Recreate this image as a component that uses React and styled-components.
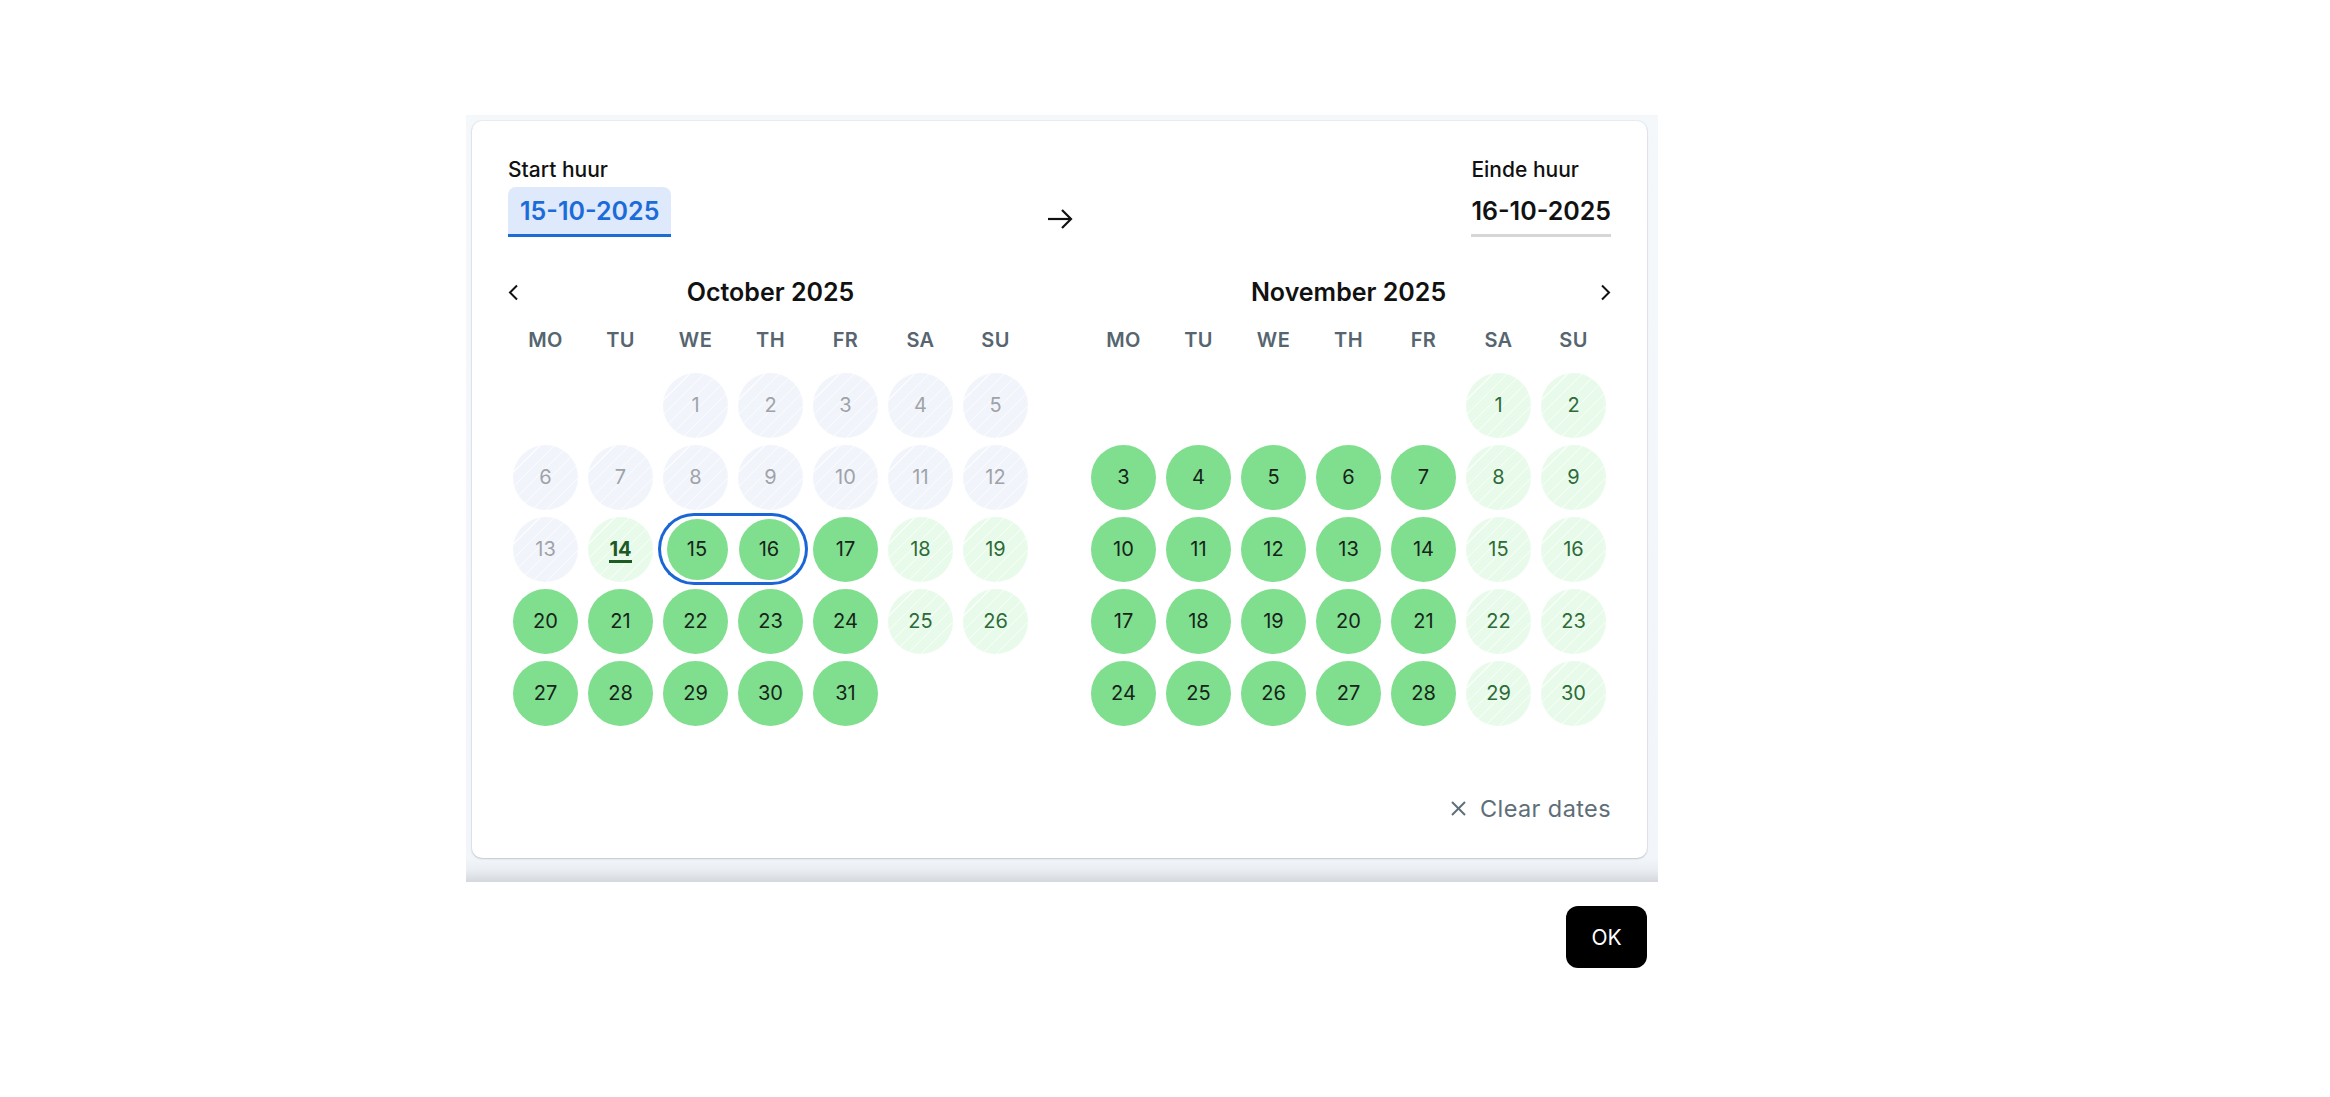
import React from 'react'
import styled, { createGlobalStyle, css } from 'styled-components'

const GlobalStyle = createGlobalStyle`
    body {
        margin: 0;
        background: #fff;
        font-family: Inter, "Noto Sans", sans-serif;
        color: #111;
    }
`

const Page = styled.div`
    padding: 115px 0 0 466px;
`

const Wrapper = styled.div`
    width: 1192px;
`

const Panel = styled.div`
    padding: 6px 11px 24px 6px;
    background: linear-gradient(to bottom, #f5f8fb 0, #f2f5f9 calc(100% - 24px), #eaeef3 calc(100% - 12px), #d4d7db 100%);
`

const Card = styled.div`
    background: #fff;
    border-radius: 10px;
    box-shadow: 0 1px 2px rgba(0, 0, 0, 0.16), 0 0 0 1px rgba(220, 228, 236, 0.5);
    padding: 37px 36px 37px;
`

const Header = styled.div`
    display: grid;
    grid-template-columns: 1fr auto 1fr;
    align-items: end;
`

const Field = styled.div`
    display: flex;
    flex-direction: column;
    align-items: flex-start;
    justify-self: ${p => (p.$right ? 'end' : 'start')};
`

const Label = styled.div`
    font-size: 21px;
    font-weight: 500;
    line-height: 24px;
    color: #111;
`

const DateBox = styled.div`
    margin-top: 5px;
    height: 47px;
    display: flex;
    align-items: center;
    font-size: 25px;
    font-weight: 600;
    ${p => p.$active ? css`
        padding: 0 12px;
        background: #dee9fb;
        color: #1b6bd8;
        border-radius: 8px 8px 0 0;
        border-bottom: 3px solid #1a6dd6;
    ` : css`
        padding: 0;
        color: #111;
        border-bottom: 3px solid #d6d6d6;
    `}
`

const ArrowWrap = styled.div`
    display: flex;
    margin-bottom: 4px;
`

const Months = styled.div`
    display: flex;
    justify-content: space-between;
    margin-top: 40px;
`

const Month = styled.div`
    width: 525px;
`

const MonthHead = styled.div`
    display: grid;
    grid-template-columns: 30px 1fr 30px;
    align-items: center;
    height: 30px;
`

const MonthTitle = styled.div`
    text-align: center;
    font-size: 25px;
    font-weight: 600;
    color: #111;
`

const NavBtn = styled.div`
    display: flex;
    justify-content: ${p => (p.$right ? 'flex-end' : 'flex-start')};
`

const Weekdays = styled.div`
    display: grid;
    grid-template-columns: repeat(7, 75px);
    margin-top: 18px;
    height: 30px;
    align-items: center;
`

const Weekday = styled.div`
    text-align: center;
    font-size: 20px;
    font-weight: 600;
    color: #56656f;
    letter-spacing: 0.4px;
`

const Days = styled.div`
    display: grid;
    grid-template-columns: repeat(7, 75px);
    grid-auto-rows: 72px;
    margin-top: 14px;
`

const Cell = styled.div`
    display: flex;
    align-items: center;
    justify-content: center;
    box-sizing: border-box;
    ${p => p.$range && css`
        border-top: 3px solid #1a66d6;
        border-bottom: 3px solid #1a66d6;
    `}
    ${p => p.$range === 'start' && css`
        border-left: 3px solid #1a66d6;
        border-radius: 37px 0 0 37px;
    `}
    ${p => p.$range === 'end' && css`
        border-right: 3px solid #1a66d6;
        border-radius: 0 37px 37px 0;
    `}
`

const stripes = 'repeating-linear-gradient(135deg, transparent 0 9px, rgba(255,255,255,0.75) 9px 10px)'

const Circle = styled.div`
    width: ${p => (p.$small ? 61 : 65)}px;
    height: ${p => (p.$small ? 61 : 65)}px;
    border-radius: 50%;
    display: flex;
    align-items: center;
    justify-content: center;
    font-size: 20px;
    font-weight: 400;
    ${p => p.$kind === 'past' && css`
        background: ${stripes}, #f1f5fb;
        color: #9fa3a8;
    `}
    ${p => p.$kind === 'light' && css`
        background: ${stripes}, #e8fbea;
        color: #2f6a39;
    `}
    ${p => p.$kind === 'today' && css`
        background: ${stripes}, #e8fbea;
        color: #1d5b25;
        font-weight: 700;
    `}
    ${p => p.$kind === 'avail' && css`
        background: #80de8f;
        color: #16241a;
    `}
`

const TodayNum = styled.span`
    border-bottom: 3px solid #1d5b25;
    line-height: 22px;
    padding-top: 3px;
`

const ClearRow = styled.div`
    display: flex;
    justify-content: flex-end;
    margin-top: 66px;
`

const ClearBtn = styled.div`
    display: flex;
    align-items: center;
    gap: 13px;
    height: 26px;
    font-size: 23.5px;
    font-weight: 400;
    color: #5e6e78;
    letter-spacing: 0.4px;
`

const Footer = styled.div`
    display: flex;
    justify-content: flex-end;
    padding-right: 11px;
    margin-top: 24px;
`

const OkButton = styled.button`
    width: 81px;
    height: 62px;
    border: none;
    border-radius: 12px;
    background: #000;
    color: #fff;
    font-family: Inter, "Noto Sans", sans-serif;
    font-size: 21px;
    font-weight: 400;
`

const WEEKDAYS = ['MO', 'TU', 'WE', 'TH', 'FR', 'SA', 'SU']

// kind of each day: past, today, light (weekend), avail
const octoberKind = (d) => {
    if (d < 14) return 'past'
    if (d === 14) return 'today'
    const wd = (d + 1) % 7 // 0 = mo
    if (wd === 5 || wd === 6) return 'light'
    return 'avail'
}

const novemberKind = (d) => {
    const wd = (d + 4) % 7
    if (wd === 5 || wd === 6) return 'light'
    return 'avail'
}

const Chevron = ({ dir }) => (
    <svg width="11" height="17" viewBox="0 0 11 17" fill="none">
        {dir === 'left'
            ? <polyline points="9,1.5 2,8.5 9,15.5" stroke="#111" strokeWidth="2" />
            : <polyline points="2,1.5 9,8.5 2,15.5" stroke="#111" strokeWidth="2" />}
    </svg>
)

const CalendarMonth = ({ title, offset, days, kindOf, nav, range }) => {
    const cells = []
    for (let i = 0; i < offset; i++) cells.push(<Cell key={'e' + i} />)
    for (let d = 1; d <= days; d++) {
        const r = range && range[d]
        const kind = kindOf(d)
        cells.push(
            <Cell key={d} $range={r}>
                <Circle $kind={kind} $small={!!r}>
                    {kind === 'today' ? <TodayNum>{d}</TodayNum> : d}
                </Circle>
            </Cell>
        )
    }
    return (
        <Month>
            <MonthHead>
                <NavBtn>{nav === 'left' && <Chevron dir="left" />}</NavBtn>
                <MonthTitle>{title}</MonthTitle>
                <NavBtn $right>{nav === 'right' && <Chevron dir="right" />}</NavBtn>
            </MonthHead>
            <Weekdays>
                {WEEKDAYS.map(w => <Weekday key={w}>{w}</Weekday>)}
            </Weekdays>
            <Days>{cells}</Days>
        </Month>
    )
}

const App = () => {
    return (
        <>
            <GlobalStyle />
            <Page>
                <Wrapper>
                    <Panel>
                        <Card>
                            <Header>
                                <Field>
                                    <Label>Start huur</Label>
                                    <DateBox $active>15-10-2025</DateBox>
                                </Field>
                                <ArrowWrap>
                                    <svg width="28" height="28" viewBox="0 0 28 28" fill="none">
                                        <line x1="2" y1="14" x2="25" y2="14" stroke="#111" strokeWidth="2.2" />
                                        <polyline points="16,5 25,14 16,23" stroke="#111" strokeWidth="2.2" />
                                    </svg>
                                </ArrowWrap>
                                <Field $right>
                                    <Label>Einde huur</Label>
                                    <DateBox>16-10-2025</DateBox>
                                </Field>
                            </Header>
                            <Months>
                                <CalendarMonth
                                    title="October 2025"
                                    offset={2}
                                    days={31}
                                    kindOf={octoberKind}
                                    nav="left"
                                    range={{ 15: 'start', 16: 'end' }}
                                />
                                <CalendarMonth
                                    title="November 2025"
                                    offset={5}
                                    days={30}
                                    kindOf={novemberKind}
                                    nav="right"
                                />
                            </Months>
                            <ClearRow>
                                <ClearBtn>
                                    <svg width="17" height="17" viewBox="0 0 17 17">
                                        <line x1="2" y1="2" x2="15" y2="15" stroke="#5e6e78" strokeWidth="2" />
                                        <line x1="15" y1="2" x2="2" y2="15" stroke="#5e6e78" strokeWidth="2" />
                                    </svg>
                                    Clear dates
                                </ClearBtn>
                            </ClearRow>
                        </Card>
                    </Panel>
                    <Footer>
                        <OkButton>OK</OkButton>
                    </Footer>
                </Wrapper>
            </Page>
        </>
    )
}

export default App
